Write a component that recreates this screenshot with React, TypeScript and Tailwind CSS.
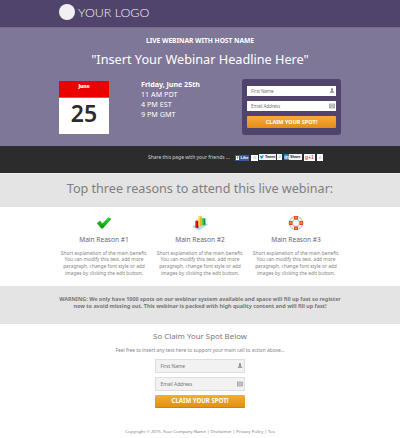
import React from "react";

const UserIcon = () => (
  <svg viewBox="0 0 6 6" className="h-[5px] w-[6px] shrink-0" fill="#85858b">
    <path d="M3 .2c.8 0 1.300.5 1.300 1.300S3.900 3 3.600 3.300v.5l1.900.6V5.600H.5V4.400l1.900-.6v-.5C2.100 3 1.700 2.300 1.700 1.500S2.200.2 3 .2z" />
  </svg>
);

const MailIcon = () => (
  <svg viewBox="0 0 6 6" className="h-[6px] w-[6px] shrink-0" fill="none" stroke="#98989d" strokeWidth=".7">
    <rect x=".6" y="1" width="4.800" height="4" fill="#dcdcde" />
    <path d="M.6 1.300L3 3.300l2.400-2M.6 5l1.700-2M5.400 5L3.700 3" />
  </svg>
);

const Logo = () => (
  <div className="flex h-[27px] items-center bg-[#50436c] pb-[3px] pl-[59px]">
    <div className="h-[16px] w-[16px] rounded-full bg-[#f1f0f2]" />
    <span className="ml-[3px] whitespace-nowrap pt-px font-['Lato'] text-[12.500px] font-light leading-[14px] tracking-[-0.060px] text-[#f4f2f7]">
      YOUR LOGO
    </span>
  </div>
);

const Calendar = () => (
  <div className="flex w-[50px] flex-col gap-px">
    <div className="h-[16px] bg-[#ec0000] pt-[2px] text-center font-['Noto_Sans'] text-[5.200px] font-black leading-[7px] tracking-[-0.200px] text-white">
      June
    </div>
    <div className="h-[36px] bg-white pt-[3px] text-center font-['Noto_Sans'] text-[23px] font-semibold leading-[24px] text-[#2b2b2b]">
      25
    </div>
  </div>
);

const HeroField = ({ label, children }: { label: string; children: React.ReactNode }) => (
  <div className="flex h-[10px] items-center justify-between bg-white pl-[4px] pr-px text-[4.600px] leading-[10px] tracking-[-0.100px] text-[#77777c]">
    <span>{label}</span>
    {children}
  </div>
);

const Field = ({ label, children }: { label: string; children: React.ReactNode }) => (
  <div className="flex h-[14px] items-center justify-between border border-[#dedede] bg-[#f2f2f2] pl-[4.500px] pr-px text-[4.800px] leading-[12px] text-[#747474]">
    <span>{label}</span>
    {children}
  </div>
);

const ShareButtons = () => (
  <div className="flex items-center pt-px font-['Liberation_Sans'] text-[4px] font-bold leading-[6px]">
    <div className="flex h-[6px] w-[14px] items-center gap-[1.500px] bg-[#3b57a2] pl-px text-white">
      <span className="flex h-[4px] w-[3px] items-center justify-center bg-white text-[4px] text-[#3b57a2]">f</span>
      <span>Like</span>
    </div>
    <div className="ml-[2px] h-[6px] w-[7px] bg-white text-center font-normal text-[#888]">0</div>
    <div className="ml-px flex h-[6px] w-[17px] -translate-y-px items-center bg-[#f5f8fa] pl-px text-[#303030]">
      <svg viewBox="0 0 24 24" className="mr-px h-[4px] w-[4px] shrink-0" fill="#139edb">
        <path d="M23 5l-3 3c0 9-6 14-13 14-3 0-5-1-6-2 3 0 5-1 6-2-3 0-4-2-5-4h2c-3-1-4-3-4-5l2 .5C0 7 0 5 2 3c3 3 6 5 10 5-1-6 5-8 8-5l3-1-2 3z" />
      </svg>
      <span className="text-[3.900px] tracking-[-0.100px]">Tweet</span>
    </div>
    <div className="ml-px h-[6px] w-[5px] -translate-y-px bg-white text-center font-normal text-[#888]">0</div>
    <div className="ml-[2px] flex h-[6px] w-[18px] -translate-y-px items-center bg-[#f2f2f2] text-[#303030]">
      <span className="mr-px h-[6px] w-[5px] shrink-0 bg-[#2184bb] text-center text-[5px] text-white">in</span>
      <span className="text-[3.900px] tracking-[-0.100px]">Share</span>
    </div>
    <div className="ml-[2px] h-[7px] w-[11px] bg-white text-center text-[5px] leading-[7px] text-[#dc4b3c]">g+1</div>
    <div className="ml-[2px] h-[7px] w-[6px] bg-white text-center font-normal leading-[7px] text-[#888]">0</div>
  </div>
);

const CheckIcon = () => (
  <svg viewBox="0 0 16 16" className="h-[16px] w-[16px]">
    <defs>
      <linearGradient id="check" x2="0" y2="1">
        <stop stopColor="#37dc37" />
        <stop offset="1" stopColor="#078f07" />
      </linearGradient>
    </defs>
    <path d="M1.200 8.300L3.900 6l2.400 3 6.200-6.300 2.500 1.200-8.300 9.300H5.400z" fill="url(#check)" stroke="#0b9a10" strokeWidth=".6" />
  </svg>
);

const ChartIcon = () => (
  <svg viewBox="0 0 16 16" className="h-[16px] w-[16px]">
    <path d="M.8 11.500L10.500 7l5 2.500L6.500 15z" fill="#b9dbf5" stroke="#8bbfe9" strokeWidth=".5" />
    <path d="M3.300 6l1.700-.8 1.300.8v6.500L5 13.300l-1.700-1z" fill="#cf2520" />
    <path d="M5 6.500l1.300-.6v6.600l-1.300.8z" fill="#9b1414" />
    <path d="M6.300 1.600L8 .9l1.800.7v9l-1.600.8-1.900-.8z" fill="#ffd83d" />
    <path d="M8.300 2.200l1.500-.6v9l-1.500.8z" fill="#efa51e" />
    <path d="M10 3.600l1.500-.7 1.800.7v6l-1.500.8-1.800-.7z" fill="#43d247" />
    <path d="M11.800 4.100l1.500-.5v6l-1.500.8z" fill="#12912a" />
  </svg>
);

const BuoyIcon = () => (
  <svg viewBox="0 0 16 16" className="h-[16px] w-[16px]" fill="none">
    <circle cx="8" cy="8" r="5.200" stroke="#f1f1f3" strokeWidth="3.400" />
    <circle cx="8" cy="8" r="6.800" stroke="#a4a4aa" strokeWidth=".7" />
    <circle cx="8" cy="8" r="3.500" stroke="#a4a4aa" strokeWidth=".7" />
    <path d="M6 .9h4v3.600H6zM6 11.500h4v3.600H6zM.9 6h3.600v4H.9zM11.500 6h3.600v4h-3.600z" fill="#e5481f" />
    <path d="M7.200 1.800h1.600v1.800H7.200zM7.200 12.400h1.600v1.800H7.200zM1.800 7.200h1.800v1.600H1.800zM12.400 7.200h1.800v1.600h-1.800z" fill="#ff9d4e" />
  </svg>
);

const Reason = ({ n, children }: { n: number; children: React.ReactNode }) => (
  <div className="flex w-[96px] flex-col items-center">
    {children}
    <h3 className="mt-[4.500px] whitespace-nowrap text-[6.600px] leading-[10px] text-[#686868]">Main Reason #{n}</h3>
    <p className="mt-[4.500px] whitespace-nowrap text-center text-[4.850px] leading-[6.670px] text-[#858585]">
      Short explanation of the main benefit.<br />
      You can modify this text, add more<br />
      paragraph, change font style or add<br />
      images by clicking the edit button.
    </p>
  </div>
);

export default function App() {
  return (
    <div className="h-[438px] w-[400px] overflow-hidden bg-white font-['Noto_Sans',sans-serif]">
      <Logo />
      <section className="h-[119px] border-t border-[#756d8f] bg-[#7e7797] text-white">
        <div className="pt-[8px] text-center text-[6.700px] font-bold leading-[10px] tracking-[-0.050px]">LIVE WEBINAR WITH HOST NAME</div>
        <h1 className="mt-[3px] text-center text-[12.700px] leading-[20px]">"Insert Your Webinar Headline Here"</h1>
        <div className="mt-[8.500px] flex pl-[59px]">
          <div className="pt-[3.500px]">
            <Calendar />
          </div>
          <div className="ml-[32px] w-[101px] whitespace-nowrap pt-px text-[7.200px] leading-[10.100px]">
            <div className="font-bold tracking-[-0.050px]">Friday, June 25th</div>
            <div>11 AM PDT</div>
            <div>4 PM EST</div>
            <div>9 PM GMT</div>
          </div>
          <div className="mt-px flex h-[56px] w-[99px] flex-col gap-[5px] rounded-[3px] bg-[#50436c] px-[5px] pt-[7px]">
            <HeroField label="First Name"><UserIcon /></HeroField>
            <HeroField label="Email Address"><MailIcon /></HeroField>
            <button className="h-[12px] rounded-[1px] bg-linear-to-b from-[#f8ac37] to-[#e48c1c] text-[5.500px] font-bold leading-[12px] text-white">CLAIM YOUR SPOT!</button>
          </div>
        </div>
      </section>
      <section className="flex h-[27px] items-center bg-[#2c2c2c] pb-[5px] pl-[148px]">
        <span className="w-[87px] shrink-0 whitespace-nowrap text-[4.950px] leading-[8px] text-[#d1d1d1]">Share this page with your friends ...</span>
        <ShareButtons />
      </section>
      <h2 className="h-[34px] border-t border-[#eee] bg-[#e4e4e4] pt-[5px] text-center text-[12.600px] leading-[20px] text-[#7e7e7e]">
        Top three reasons to attend this live webinar:
      </h2>
      <section className="flex h-[79px] justify-center pt-[7.500px]">
        <Reason n={1}><CheckIcon /></Reason>
        <Reason n={2}><ChartIcon /></Reason>
        <Reason n={3}><BuoyIcon /></Reason>
      </section>
      <section className="h-[38px] whitespace-nowrap bg-[#e4e4e4] pt-[9.500px] text-center text-[5.400px] font-bold leading-[7.300px] text-[#777]">
        WARNING: We only have 1000 spots on our webinar system available and space will fill up fast so register<br />
        now to avoid missing out. This webinar is packed with high quality content and will fill up fast!
      </section>
      <section className="flex flex-col items-center">
        <h2 className="mt-[6px] text-[7.850px] leading-[12px] text-[#777]">So Claim Your Spot Below</h2>
        <p className="mt-[3.500px] text-[4.850px] leading-[8px] text-[#858585]">Feel free to insert any text here to support your main call to action above...</p>
        <div className="mt-[5px] flex w-[90px] flex-col gap-[4px]">
          <Field label="First Name"><UserIcon /></Field>
          <Field label="Email Address"><MailIcon /></Field>
          <button className="h-[13px] rounded-[1px] border-b border-[#c9820e] bg-linear-to-b from-[#f6ad2d] to-[#e09112] text-[6.100px] font-bold leading-[12px] text-white">CLAIM YOUR SPOT!</button>
        </div>
        <footer className="mt-[19px] text-[4.300px] leading-[8px] text-[#808080]">
          Copyright © 2015. Your Company Name | Disclaimer | Privacy Policy | Tos
        </footer>
      </section>
    </div>
  );
}
